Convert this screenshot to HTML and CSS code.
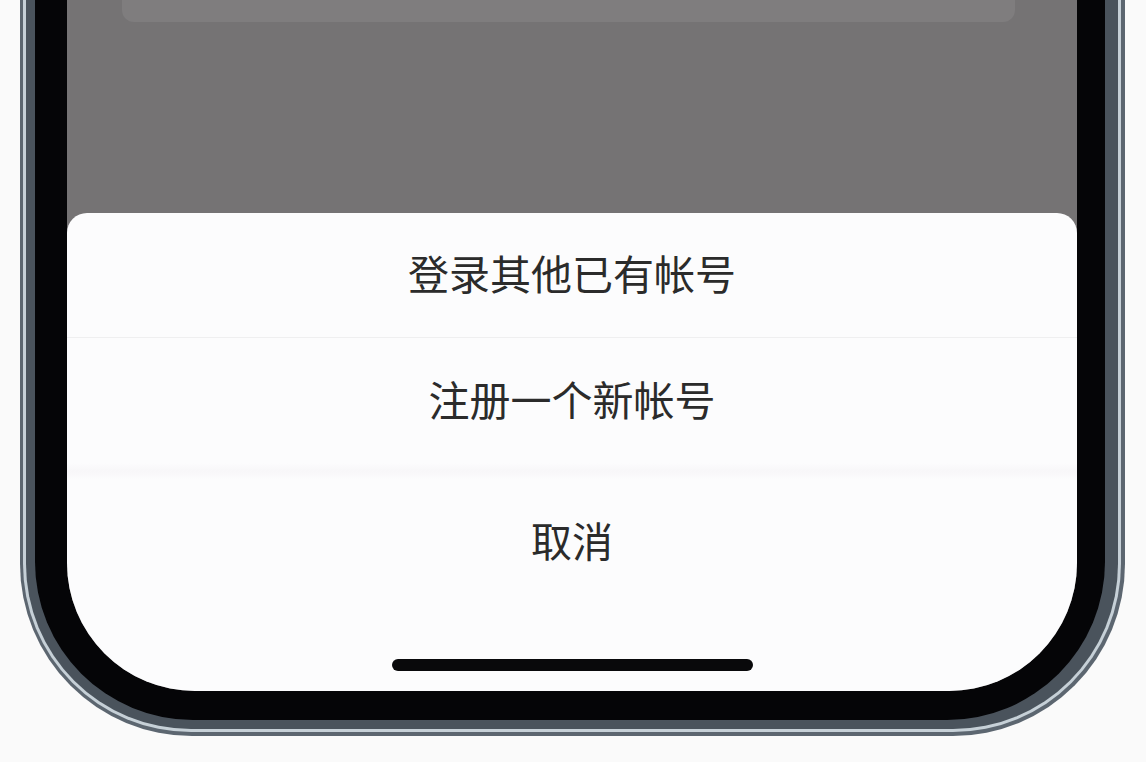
FILE: index.html
```html
<!DOCTYPE html>
<html>
<head>
    <meta charset="utf-8">
    <title>帐号</title>
    <link rel="stylesheet" href="styles.css">
</head>

<body>
    <div class="phone">
        <div class="phone-line">
            <div class="phone-band">
                <div class="bezel">
                    <div class="screen">
                        <div class="top-card"></div>

                        <!-- action sheet -->
                        <div class="sheet">
                            <div class="option option-first">登录其他已有帐号</div>
                            <div class="option">注册一个新帐号</div>
                            <div class="sheet-gap"></div>
                            <div class="option option-cancel">取消</div>
                            <div class="home-bar"></div>
                        </div>
                    </div>
                </div>
            </div>
        </div>
    </div>
</body>
</html>
```

FILE: styles.css
```css
body {
    margin: 0;
    height: 762px;
    overflow: hidden;
    background: #fafafa;
    font-family: "Noto Sans CJK SC", "Noto Sans", sans-serif;
}

/* phone body, layered from the outer rim inwards */
.phone {
    margin: 0 21px 0 20px;
    padding: 0 4px 4px 3px;
    background: #5c6670;
    border-radius: 0 0 172px 172px;
}

.phone-line {
    padding: 0 3px 3px 3px;
    background: #c6d0d7;
    border-radius: 0 0 168px 168px;
}

.phone-band {
    padding: 0 13px 9px 9px;
    background: #4a535c;
    border-radius: 0 0 165px 165px;
}

.bezel {
    padding: 0 28px 29px 32px;
    background: #050507;
    border-radius: 0 0 158px 158px;
}

.screen {
    height: 691px;
    display: flex;
    flex-direction: column;
    background: #757374;
    border-radius: 0 0 128px 128px;
    overflow: hidden;
}

.top-card {
    height: 22px;
    margin: 0 62px 0 55px;
    background: #7f7d7e;
    border-radius: 0 0 12px 12px;
}

/* 🔥 action sheet */
.sheet {
    flex: 1;
    margin-top: 191px;
    display: flex;
    flex-direction: column;
    background: #fcfcfd;
    border-radius: 20px 20px 0 0;
}

.option {
    box-sizing: border-box;
    height: 125px;
    padding-bottom: 6px;
    display: flex;
    align-items: center;
    justify-content: center;
    font-size: 41px;
    color: #2b2b2b;
}

.option-first {
    border-bottom: 1px solid #efeff0;
}

.option-cancel {
    height: 126px;
}

.sheet-gap {
    height: 16px;
    background: linear-gradient(to bottom, #fcfcfd, #f8f7f9 45%, #f9f8fa 70%, #fcfcfd);
}

.home-bar {
    align-self: center;
    width: 361px;
    height: 12px;
    margin-top: 54px;
    background: #09090b;
    border-radius: 6px;
}
```
